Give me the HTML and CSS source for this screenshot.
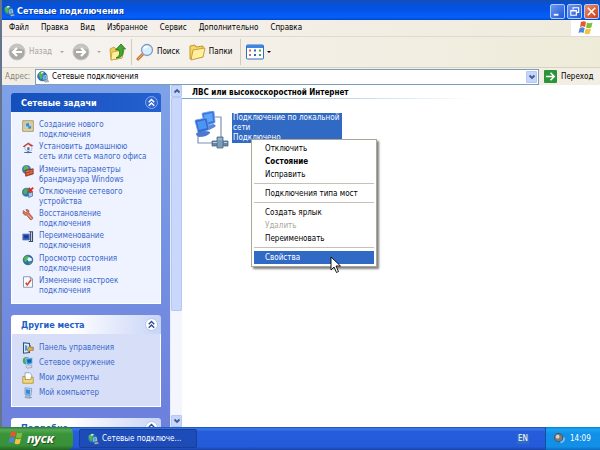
FILE: index.html
```
<!DOCTYPE html>
<html lang="ru">
<head>
    <meta charset="UTF-8" />
    <title>Сетевые подключения</title>
    <link rel="stylesheet" href="styles.css">
</head>
<body>
<svg class="sprite" aria-hidden="true">
    <symbol id="i-net" viewBox="0 0 16 16">
        <circle cx="7" cy="7" r="6.2" fill="#2a74cf" stroke="#17478c" stroke-width=".7"/>
        <path d="M2 4C4 1 8 1 9 3L7 6l1 3-3 2-2-4z" fill="#52b84e"/>
        <path d="M5 2l3-1 1 1-3 2z" fill="#d9f5ff"/>
        <path d="M7 6l6-1 1 6-6 1z" fill="#cfe6f5" stroke="#35597c" stroke-width=".8"/>
        <path d="M8 7l4-.7.8 3.8-4 .7z" fill="#3faae3"/>
        <path d="M9 13l5-1 2 2-5 1z" fill="#b9c2ca" stroke="#5a6b7a" stroke-width=".6"/>
    </symbol>
    <symbol id="i-wizard" viewBox="0 0 16 16">
        <path d="M1 1h14v14H1z" fill="#f1dfa4" stroke="#8a7440"/>
        <path d="M3 3h10v9H3z" fill="#b5d8ee" stroke="#d8b960"/>
        <path d="M5 5l4-1 1 4-4 1zM8 9l4-1v3l-3 1z" fill="#3c87bd"/>
    </symbol>
    <symbol id="i-home" viewBox="0 0 16 16">
        <path d="M2 6l7-5 6 4-2 1v5l-5 2-4-3V7z" fill="#f4f4fa" stroke="#8895ad" stroke-width=".7"/>
        <path d="M1 6l7-5 7 4-3 1-4-3-5 4z" fill="#c8382c"/>
        <path d="M7 7h3v4H7z" fill="#416eb8"/>
        <path d="M3 14h10M8 12v3" stroke="#4e6a99" stroke-width="1.6"/>
    </symbol>
    <symbol id="i-firewall" viewBox="0 0 16 16">
        <circle cx="6" cy="6" r="5.4" fill="#3682c4" stroke="#24598d" stroke-width=".7"/>
        <path d="M2 3l4-2 3 2-2 3-4 1z" fill="#5cbc4b"/>
        <path d="M4 7l11-2v7L5 15z" fill="#bd3f23" stroke="#722216" stroke-width=".8"/>
        <path d="M4 9l11-2M5 12l10-2M8 6v3m4-1v3m-4 0v3" stroke="#e99a70" stroke-width=".7"/>
    </symbol>
    <symbol id="i-off" viewBox="0 0 16 16">
        <circle cx="6" cy="7" r="5.4" fill="#2f77c5" stroke="#234c85" stroke-width=".7"/>
        <path d="M2 4l4-2 2 3-2 4-4 1z" fill="#50b04b"/>
        <path d="M8 8l6-1v5l-5 2z" fill="#9bcbe9" stroke="#34536f" stroke-width=".8"/>
        <path d="M9 1l5 6m1-6L8 7" stroke="#d5321f" stroke-width="2.2"/>
    </symbol>
    <symbol id="i-repair" viewBox="0 0 16 16">
        <path d="M2 2l3 3 2-2-2-2c4-1 5 2 4 4l5 6c1 2-1 4-3 3L6 8C3 9 0 6 2 2z" fill="#e07661" stroke="#83392e" stroke-width=".8"/>
        <path d="M8 8l5 5" stroke="#fbb8a5"/>
    </symbol>
    <symbol id="i-rename" viewBox="0 0 16 16">
        <path d="M1 4h9v8H1z" fill="#2e56c0" stroke="#7181a5"/>
        <path d="M3 6h5v3H3z" fill="#16349a"/>
        <path d="M9 1h5v13H9m2.500-13v13" fill="none" stroke="#39496f" stroke-width="1.5"/>
    </symbol>
    <symbol id="i-status" viewBox="0 0 16 16">
        <circle cx="8" cy="8" r="6.4" fill="#2970bb" stroke="#345777"/>
        <path d="M3 4l5-2 1 4-4 5-2-2z" fill="#56b84a"/>
        <path d="M9 4l4 2v3l-4 1-2-3z" fill="#edf8ff"/>
        <path d="M9 12l4-2-2 4z" fill="#4cad45"/>
    </symbol>
    <symbol id="i-settings" viewBox="0 0 16 16">
        <path d="M2 1h9l3 3v11H2z" fill="#f9faff" stroke="#6d7b9b"/>
        <path d="M11 1v3h3" fill="none" stroke="#6d7b9b"/>
        <path d="M5 9l2 3 5-7" fill="none" stroke="#d94228" stroke-width="2"/>
    </symbol>
    <symbol id="i-panel" viewBox="0 0 16 16">
        <path d="M2 1l8 1v12l-8 1z" fill="#dceeff" stroke="#31517e" stroke-width="1.4"/>
        <path d="M4 4l3 1v6l-3 1z" fill="#5597d5"/>
        <path d="M7 10l4-6v3h4v4h-4l-2 3z" fill="#e9b847" stroke="#5e5430" stroke-width=".8"/>
    </symbol>
    <symbol id="i-places" viewBox="0 0 16 16">
        <circle cx="6" cy="5" r="5" fill="#4aa564"/>
        <path d="M5 2l9-1v8l-8 1z" fill="#2e8edb" stroke="#bdd7ed"/>
        <path d="M7 4l5-1v4l-4 1z" fill="#155eb1"/>
        <path d="M8 10l5 1v3l-6 1-2-2z" fill="#cfd9e8" stroke="#6d819e" stroke-width=".7"/>
    </symbol>
    <symbol id="i-docs" viewBox="0 0 16 16">
        <path d="M4 1h6l3 3v8H4z" fill="#fff" stroke="#8793aa"/>
        <path d="M1 6h3v4h8V7h3v8H1z" fill="#f2d777" stroke="#ae8932"/>
    </symbol>
    <symbol id="i-computer" viewBox="0 0 16 16">
        <path d="M4 1l9 1-1 9-8-1z" fill="#cbe0f5" stroke="#6f8db0"/>
        <path d="M5 3l6 .500-.500 6L5 8.500z" fill="#2d8be0"/>
        <path d="M6 10l4 1v2l3 1-3 1-6-1z" fill="#a7b8d0" stroke="#667c9e" stroke-width=".7"/>
    </symbol>
    <symbol id="i-folder" viewBox="0 0 18 18">
        <path d="M2 3l5-1 1 2 7-1v11L2 16z" fill="#f8d568" stroke="#c09829"/>
        <path d="M5 7l12-2-2 9-12 3z" fill="#fff0a0" stroke="#c9a13a"/>
    </symbol>
    <symbol id="i-flag" viewBox="0 0 16 16">
        <path d="M3 2c2-1 3-1 5 0L7 7C5 6 4 6 2 7z" fill="#e9552e"/>
        <path d="M9 2.500c2 1 3 1 5.500 0l-1.200 5C11 8.500 10 8.300 8 7.500z" fill="#7fbd40"/>
        <path d="M1.700 8c2-1 3-1 5 0l-1.200 5c-2-1-3-1-5 0z" fill="#4b86dc"/>
        <path d="M7.700 8.500c2 1 3 1 5.300 0l-1.200 5c-2 1-3.300 1-5.300 0z" fill="#f4c23c"/>
    </symbol>
    <symbol id="i-up" viewBox="0 0 10 10">
        <path d="M2.500 4.800L5 2.300l2.500 2.500M2.500 8L5 5.500 7.500 8" fill="none" stroke="currentColor" stroke-width="1.300"/>
    </symbol>
    <symbol id="i-arrow" viewBox="0 0 18 18">
        <circle cx="9" cy="9" r="8" fill="#aaa9a6" stroke="#c9c8c3"/>
        <path d="M2 7a7 6 0 0 1 14 0q-7-3-14 0z" fill="#c5c4c1"/>
        <path d="M4 9h9M9 5l4 4-4 4" fill="none" stroke="#fff" stroke-width="2.200"/>
    </symbol>
    <symbol id="i-chevron" viewBox="0 0 8 8">
        <path d="M1.500 2.500L4 5l2.500-2.500" fill="none" stroke="#45598c" stroke-width="1.800"/>
    </symbol>
</svg>

<div class="window">
    <header class="titlebar">
        <svg class="icon"><use href="#i-net"/></svg>
        <h1>Сетевые подключения</h1>
        <button class="win-btn" aria-label="Свернуть"><svg viewBox="0 0 14 14"><path d="M3 10.500h5" stroke="#fff" stroke-width="2"/></svg></button>
        <button class="win-btn" aria-label="Развернуть"><svg viewBox="0 0 14 14"><path d="M5.500 5V3h6v5H9.500M3 6h6v5H3zM3 6.500h6" fill="none" stroke="#fff" stroke-width="1.200"/></svg></button>
        <button class="win-btn close" aria-label="Закрыть"><svg viewBox="0 0 14 14"><path d="M3 3l8 8m0-8l-8 8" stroke="#fff" stroke-width="1.700"/></svg></button>
    </header>

    <nav class="menubar">
        <button>Файл</button>
        <button>Правка</button>
        <button>Вид</button>
        <button>Избранное</button>
        <button>Сервис</button>
        <button>Дополнительно</button>
        <button>Справка</button>
        <span class="brand"><svg><use href="#i-flag"/></svg></span>
    </nav>

    <div class="toolbar">
        <button class="tool back" disabled><svg class="flip"><use href="#i-arrow"/></svg>Назад<i class="caret"></i></button>
        <button class="tool forward" disabled aria-label="Вперед"><svg><use href="#i-arrow"/></svg><i class="caret"></i></button>
        <button class="tool up" aria-label="Вверх">
            <svg viewBox="0 0 18 18"><path d="M1 6l4-2 2 2 6-1v10L2 17z" fill="#f3cd5c" stroke="#c09829" stroke-width=".8"/><path d="M3 9l12-2-2 8-11 2z" fill="#fff0a0" stroke="#c9a13a" stroke-width=".8"/><path d="M7 15c4-2 4-5 3-8H6.500L12 1l4.500 5H14c1 5-1 9-7 9z" fill="#42a82f" stroke="#20701b" stroke-width=".8"/></svg>
        </button>
        <span class="divider"></span>
        <button class="tool search"><svg viewBox="0 0 18 18"><path d="M7 11l-5 5" stroke="#c87532" stroke-width="3" stroke-linecap="round"/><path d="M7 11l-5 5" stroke="#f0b269" stroke-linecap="round"/><circle cx="11" cy="7" r="5.500" fill="#d6efff" stroke="#7d9cc5" stroke-width="1.300"/><path d="M8 6q1-3 4-2" fill="none" stroke="#fff" stroke-width="1.500"/></svg>Поиск</button>
        <button class="tool"><svg><use href="#i-folder"/></svg>Папки</button>
        <span class="divider"></span>
        <button class="tool views" aria-label="Вид значков">
            <svg viewBox="0 0 18 16"><rect x=".5" y="1" width="17" height="14" rx="1" fill="#fff" stroke="#2e6fc8"/><path d="M1 2.500h16" stroke="#3d86e2" stroke-width="3"/><path d="M3 6.500h2M3 11h2" stroke="#c66b64" stroke-width="2"/><path d="M8 6.500h2M8 11h2" stroke="#3763b5" stroke-width="2"/><path d="M13 6.500h2M13 11h2" stroke="#51a05a" stroke-width="2"/></svg>
            <i class="caret"></i>
        </button>
    </div>

    <form class="address">
        <label for="path">Адрес:</label>
        <div class="combo">
            <svg class="icon"><use href="#i-net"/></svg>
            <input type="text" id="path" value="Сетевые подключения">
            <button type="button" class="scroll-btn" aria-label="Список"><svg><use href="#i-chevron"/></svg></button>
        </div>
        <button type="button" class="go"><svg viewBox="0 0 14 14"><rect width="14" height="14" rx="1" fill="#2b943a"/><path d="M2 7h9M7 3l4 4-4 4" fill="none" stroke="#fff" stroke-width="1.700"/></svg>Переход</button>
    </form>

    <div class="content">
        <aside class="sidebar">
            <section class="panel primary">
                <h2>Сетевые задачи <button aria-label="Свернуть"><svg><use href="#i-up"/></svg></button></h2>
                <ul class="tasks">
                    <li><svg class="icon"><use href="#i-wizard"/></svg><a href="#">Создание нового<br>подключения</a></li>
                    <li><svg class="icon"><use href="#i-home"/></svg><a href="#">Установить домашнюю<br>сеть или сеть малого офиса</a></li>
                    <li><svg class="icon"><use href="#i-firewall"/></svg><a href="#">Изменить параметры<br>брандмауэра Windows</a></li>
                    <li><svg class="icon"><use href="#i-off"/></svg><a href="#">Отключение сетевого<br>устройства</a></li>
                    <li><svg class="icon"><use href="#i-repair"/></svg><a href="#">Восстановление<br>подключения</a></li>
                    <li><svg class="icon"><use href="#i-rename"/></svg><a href="#">Переименование<br>подключения</a></li>
                    <li><svg class="icon"><use href="#i-status"/></svg><a href="#">Просмотр состояния<br>подключения</a></li>
                    <li><svg class="icon"><use href="#i-settings"/></svg><a href="#">Изменение настроек<br>подключения</a></li>
                </ul>
            </section>
            <section class="panel">
                <h2>Другие места <button aria-label="Свернуть"><svg><use href="#i-up"/></svg></button></h2>
                <ul class="places">
                    <li><svg class="icon"><use href="#i-panel"/></svg><a href="#">Панель управления</a></li>
                    <li><svg class="icon"><use href="#i-places"/></svg><a href="#">Сетевое окружение</a></li>
                    <li><svg class="icon"><use href="#i-docs"/></svg><a href="#">Мои документы</a></li>
                    <li><svg class="icon"><use href="#i-computer"/></svg><a href="#">Мой компьютер</a></li>
                </ul>
            </section>
            <section class="panel">
                <h2>Подробно <button aria-label="Свернуть"><svg><use href="#i-up"/></svg></button></h2>
            </section>
        </aside>
        <div class="scrollbar">
            <button class="scroll-btn" aria-label="Вверх"><svg class="flip-y"><use href="#i-chevron"/></svg></button>
            <span class="thumb"></span>
            <button class="scroll-btn down" aria-label="Вниз"><svg><use href="#i-chevron"/></svg></button>
        </div>
        <main>
            <h2 class="group">ЛВС или высокоскоростной Интернет</h2>
            <div class="connection">
                <svg class="lan" viewBox="0 0 38 38">
                    <path d="M22 6h6v20M5 25v7h15" fill="none" stroke="#7f92b4" stroke-width="1.200"/>
                    <path d="M9 3q0-1 1-1l10-2q1 0 1 1l1 10q0 1-1 1l-9 3z" fill="#3b77df" stroke="#6b9cec" stroke-width=".8"/>
                    <path d="M11 4l8-2 1 8-8 2z" fill="#5da6f7"/>
                    <path d="M14 15l6-2q4 1 2 3l-6 3z" fill="#5f86d4"/>
                    <path d="M2 10q0-1 1-1l10-2q1 0 1 1l2 10q0 1-1 1l-9 3q-1 0-1-1z" fill="#3269d4" stroke="#6b9cec" stroke-width=".8"/>
                    <path d="M4 11l8-2 2 8-8 2z" fill="#4b96f0"/>
                    <path d="M3 23q0-2 8-3 7 0 6 2-3 4-11 4-3-1-3-3z" fill="#4d78cf"/>
                    <path d="M19 30h16v5H19z" fill="#6687aa" stroke="#4a6782" stroke-width=".8"/>
                    <path d="M24 26h6v11h-6z" fill="#7d9cba" stroke="#4a6782" stroke-width=".8"/>
                    <path d="M20 31.500h4m7 0h3M25 28h4" stroke="#b6cfe2"/>
                </svg>
                <p class="selected">Подключение по локальной<br>сети<br>Подключено</p>
                <div class="context-menu" role="menu">
                    <button role="menuitem">Отключить</button>
                    <button role="menuitem" class="default">Состояние</button>
                    <button role="menuitem">Исправить</button>
                    <hr>
                    <button role="menuitem">Подключения типа мост</button>
                    <hr>
                    <button role="menuitem">Создать ярлык</button>
                    <button role="menuitem" disabled>Удалить</button>
                    <button role="menuitem">Переименовать</button>
                    <hr>
                    <button role="menuitem" class="active">Свойства</button>
                    <svg class="cursor" viewBox="0 0 12 18"><path d="M1 1v13l3-3 2.500 5.500 2-1L6 10h4.500z" fill="#fff" stroke="#000" stroke-width=".9"/></svg>
                </div>
            </div>
        </main>
    </div>
</div>

<footer class="taskbar">
    <button class="start"><svg><use href="#i-flag"/></svg>пуск</button>
    <button class="task"><svg class="icon"><use href="#i-net"/></svg>Сетевые подключе...</button>
    <span class="lang">EN</span>
    <div class="tray">
        <svg viewBox="0 0 14 14"><circle cx="6" cy="6" r="4.500" fill="#777c7e" stroke="#43535e"/><circle cx="5" cy="5" r="2" fill="#d8d6c8"/><path d="M8 11q4 0 4-5" fill="none" stroke="#7db9f5" stroke-width="2"/></svg>
        <time>14:09</time>
    </div>
</footer>
</body>
</html>
```
FILE: styles.css
```
* {
    box-sizing: border-box;
}
body {
    margin: 0;
    height: 100vh;
    display: flex;
    flex-direction: column;
    overflow: hidden;
    font-family: 'DejaVu Sans Condensed', 'Noto Sans', sans-serif;
    font-size: 8px;
    line-height: 10px;
    color: #000;
    cursor: default;
}
h1, h2, p, ul {
    margin: 0;
    padding: 0;
}
button, input {
    font: inherit;
    color: inherit;
    border: 0;
    padding: 0;
    background: none;
}
svg {
    display: block;
    flex: none;
}
.sprite {
    display: none;
}
.icon {
    width: 12px;
    height: 12px;
}
.window {
    flex: 1;
    min-height: 0;
    display: flex;
    flex-direction: column;
    border-left: 2px solid #66748c;
}

/* title bar */
.titlebar {
    display: flex;
    align-items: center;
    gap: 2px;
    height: 20px;
    padding: 1px 1px 0 1px;
    border-top: 1px solid #1c4f9c;
    background: linear-gradient(#0a50d0, #0452e2 40%, #0560fb 85%, #0347cf);
}
.titlebar h1 {
    flex: 1;
    font-size: 9px;
    line-height: 12px;
    color: #fff;
    text-shadow: 1px 1px #0a3a9a;
}
.win-btn {
    width: 15px;
    height: 15px;
    border: 1px solid #b4ccf8;
    border-radius: 2px;
    background: linear-gradient(135deg, #6c98f2, #2256d6);
}
.win-btn.close {
    background: linear-gradient(135deg, #ee8a68, #cc3b12);
}
.win-btn svg {
    width: 13px;
    height: 13px;
}

/* menu and toolbars */
.menubar {
    display: flex;
    align-items: center;
    gap: 12px;
    height: 17px;
    padding-left: 7px;
    background: linear-gradient(90deg, #f6f1ef, #f3eee6 50%, #efebdc);
    border-bottom: 1px solid #dedacd;
}
.brand {
    width: 29px;
    height: 16px;
    margin-left: auto;
    display: flex;
    justify-content: center;
    background: #fff;
}
.brand svg {
    width: 16px;
    height: 16px;
}
.toolbar {
    display: flex;
    align-items: center;
    height: 31px;
    padding-left: 6px;
    background: linear-gradient(90deg, #f7f3f2, #f3efe6 50%, #efebd9);
    border-bottom: 1px solid #d8d4c4;
}
.tool {
    display: flex;
    align-items: center;
    gap: 3px;
    margin-right: 8px;
}
.tool:disabled {
    color: #a9a69c;
}
.tool svg {
    width: 18px;
    height: 18px;
}
.back .caret {
    margin-left: 5px;
}
.forward .caret {
    margin-left: 4px;
}
.tool.up {
    margin-right: 4px;
}
.flip {
    transform: scaleX(-1);
}
.flip-y {
    transform: scaleY(-1);
}
.caret {
    border: 2px solid transparent;
    border-top-color: currentColor;
    border-bottom: 0;
}
.divider {
    width: 1px;
    height: 26px;
    margin-right: 4px;
    background: #cfcbbd;
}
.views {
    margin-left: 1px;
}
.address {
    display: flex;
    align-items: center;
    height: 17px;
    padding-left: 3px;
    background: #f2eee3;
}
.address label {
    width: 30px;
    color: #85837b;
}
.combo {
    flex: 1;
    display: flex;
    align-items: center;
    gap: 3px;
    height: 16px;
    padding: 0 1px;
    border: 1px solid #7f9db9;
    background: #fff;
}
.combo input {
    flex: 1;
    outline: none;
}
.go {
    display: flex;
    align-items: center;
    gap: 4px;
    width: 61px;
    padding-left: 5px;
}
.go svg {
    width: 13px;
    height: 13px;
}
.scroll-btn {
    width: 11px;
    height: 12px;
    display: flex;
    align-items: center;
    justify-content: center;
    border: 1px solid #b4c8f4;
    border-radius: 1px;
    background: #c6d5fb;
}
.scroll-btn svg {
    width: 8px;
    height: 8px;
}

/* task pane */
.content {
    flex: 1;
    min-height: 0;
    display: flex;
}
.sidebar {
    width: 168px;
    display: flex;
    flex-direction: column;
    gap: 11px;
    padding: 8px 9px 0;
    overflow: hidden;
    background: linear-gradient(#7ea2e8, #6c80dc);
}
.panel {
    flex: none;
}
.panel h2 {
    display: flex;
    align-items: center;
    justify-content: space-between;
    height: 19px;
    padding: 0 3px 0 10px;
    border-radius: 3px 3px 0 0;
    font-size: 9px;
    color: #215dc6;
    background: linear-gradient(90deg, #fff 40%, #c8d4f7);
}
.panel h2 button {
    width: 13px;
    height: 13px;
    border: 1px solid #b6c5e9;
    border-radius: 50%;
    color: #2b4f9c;
    background: #fff;
}
.panel h2 svg {
    width: 11px;
    height: 11px;
}
.panel.primary h2 {
    color: #fff;
    background: linear-gradient(90deg, #1450bb, #2560d0);
}
.panel.primary h2 button {
    color: #fff;
    border-color: #84a6ec;
    background: #2f66d2;
}
.panel ul {
    display: grid;
    padding: 8px 10px 7px;
    list-style: none;
    border: 1px solid #fff;
    border-top: 0;
    background: #d6dff7;
}
.panel.primary ul {
    background: #eff3ff;
}
.panel .tasks {
    align-content: space-between;
    min-height: 192px;
}
.panel .places {
    gap: 3px;
}
.panel li {
    display: flex;
    gap: 5px;
    white-space: nowrap;
}
.panel a {
    color: #3a68cc;
    text-decoration: none;
}
.places li {
    align-items: center;
}
.scrollbar {
    width: 12px;
    display: flex;
    flex-direction: column;
    border-left: 1px solid #e6ebfa;
    background: #f5f6fd;
}
.thumb {
    height: 214px;
    border: 1px solid #b4c8f4;
    border-radius: 1px;
    background: #c9d7fc;
}
.scrollbar .down {
    margin-top: auto;
}

/* connections list */
main {
    flex: 1;
    padding-top: 2px;
    background: #fff;
}
.group {
    padding-left: 10px;
    font-size: 8px;
    line-height: 11px;
    border-bottom: 1px solid;
    border-image: linear-gradient(90deg, #70a0dc, #fff 70%) 1;
}
.connection {
    position: relative;
    display: flex;
    gap: 1px;
    padding: 12px 0 0 11px;
}
.lan {
    width: 38px;
    height: 38px;
}
.selected {
    width: 110px;
    height: 30px;
    margin-top: 2px;
    padding-left: 1px;
    color: #fff;
    background: #316ac5;
    white-space: nowrap;
}
.context-menu {
    position: absolute;
    top: 40px;
    left: 69px;
    width: 126px;
    padding: 2px;
    border: 1px solid #aca899;
    background: #fff;
    box-shadow: 2px 2px 2px rgba(0, 0, 0, 0.5);
}
.context-menu button {
    display: block;
    width: 100%;
    height: 13px;
    padding-left: 11px;
    text-align: left;
}
.context-menu .default {
    font-weight: bold;
}
.context-menu button:disabled {
    color: #aca899;
}
.context-menu .active {
    color: #fff;
    background: #316ac5;
}
.context-menu hr {
    height: 1px;
    margin: 2px 0 3px;
    border: 0;
    background: #c5c2b5;
}
.cursor {
    position: absolute;
    top: 116px;
    left: 78px;
    width: 12px;
    height: 18px;
}

/* taskbar */
.taskbar {
    display: flex;
    align-items: center;
    height: 23px;
    color: #fff;
    background: linear-gradient(#1a4cab, #3a7cee 8%, #245cdc 20%, #235bdb 85%, #1a44a4);
}
.start {
    display: flex;
    align-items: center;
    gap: 3px;
    width: 73px;
    height: 23px;
    padding: 0 0 1px 8px;
    border-radius: 0 6px 6px 0;
    font-family: 'Noto Sans', sans-serif;
    font-size: 13px;
    font-weight: bold;
    font-style: italic;
    text-shadow: 1px 1px 1px #1f4a1c;
    background: linear-gradient(#2f7a2f, #55a955 12%, #3a953a 30%, #389038 80%, #236623);
}
.start svg {
    width: 16px;
    height: 16px;
}
.task {
    display: flex;
    align-items: center;
    gap: 3px;
    width: 118px;
    height: 19px;
    margin-left: 6px;
    padding-left: 7px;
    border: 1px solid #163f95;
    border-radius: 2px;
    background: #1d4cb8;
}
.lang {
    width: 12px;
    margin: 0 16px 0 auto;
    text-align: center;
    background: #316ac5;
}
.tray {
    display: flex;
    align-items: center;
    gap: 4px;
    width: 55px;
    height: 23px;
    padding-left: 7px;
    border-left: 1px solid #0e4f9f;
    background: linear-gradient(#0d7fd8, #18a5f0 10%, #1290e8 30%, #1290e8 85%, #0c6cc0);
}
.tray svg {
    width: 13px;
    height: 13px;
}
```
